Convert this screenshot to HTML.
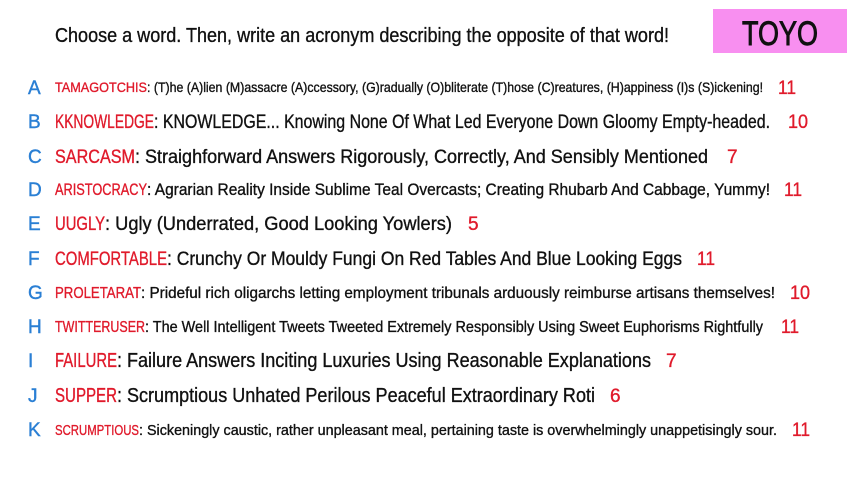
<!DOCTYPE html>
<html><head><meta charset="utf-8"><style>
html,body{margin:0;padding:0;background:#fff;width:853px;height:480px;overflow:hidden}
svg{display:block}
text{font-family:"Liberation Sans Narrow","Liberation Sans",sans-serif}
.l{fill:#2a7fd4;font-size:19px;stroke:#2a7fd4;stroke-width:0.4}
.r{fill:#e01a2b;stroke:#e01a2b;stroke-width:0.35}
.k{fill:#111;stroke:#111;stroke-width:0.35}
</style></head><body>
<svg width="853" height="480" viewBox="0 0 853 480" xmlns="http://www.w3.org/2000/svg">
<rect width="853" height="480" fill="#fff"/>
<text x="55" y="42" font-size="20" class="k" textLength="614" lengthAdjust="spacingAndGlyphs">Choose a word. Then, write an acronym describing the opposite of that word!</text>
<rect x="713" y="9" width="134" height="44" fill="#f88ff0"/>
<text x="742" y="45" font-size="34" class="k" style="stroke-width:0.9" textLength="76" lengthAdjust="spacingAndGlyphs">TOYO</text>

<g>
<text x="28" y="94" class="l">A</text>
<text x="55" y="92" font-size="14" class="r" textLength="92" lengthAdjust="spacingAndGlyphs">TAMAGOTCHIS</text>
<text x="147" y="92" font-size="14" class="k" textLength="616" lengthAdjust="spacingAndGlyphs">:  (T)he (A)lien (M)assacre (A)ccessory, (G)radually (O)bliterate (T)hose (C)reatures, (H)appiness (I)s (S)ickening!</text>
<text x="778" y="94" font-size="19" class="r" textLength="18" lengthAdjust="spacingAndGlyphs">11</text>

<text x="28" y="128" class="l">B</text>
<text x="55" y="128" font-size="19" class="r" textLength="99" lengthAdjust="spacingAndGlyphs">KKNOWLEDGE</text>
<text x="154" y="128" font-size="19" class="k" textLength="616" lengthAdjust="spacingAndGlyphs">:  KNOWLEDGE... Knowing None Of What Led Everyone Down Gloomy Empty-headed.</text>
<text x="788" y="128" font-size="19" class="r" textLength="20" lengthAdjust="spacingAndGlyphs">10</text>

<text x="28" y="163" class="l">C</text>
<text x="55" y="163" font-size="19" class="r" textLength="80" lengthAdjust="spacingAndGlyphs">SARCASM</text>
<text x="135" y="163" font-size="19" class="k" textLength="573" lengthAdjust="spacingAndGlyphs">:  Straighforward Answers Rigorously, Correctly, And Sensibly Mentioned</text>
<text x="727" y="163" font-size="19" class="r">7</text>

<text x="28" y="196" class="l">D</text>
<text x="55" y="195" font-size="17" class="r" textLength="92" lengthAdjust="spacingAndGlyphs">ARISTOCRACY</text>
<text x="147" y="195" font-size="17" class="k" textLength="623" lengthAdjust="spacingAndGlyphs">:  Agrarian Reality Inside Sublime Teal Overcasts; Creating Rhubarb And Cabbage, Yummy!</text>
<text x="784" y="196" font-size="19" class="r" textLength="18" lengthAdjust="spacingAndGlyphs">11</text>

<text x="28" y="230" class="l">E</text>
<text x="55" y="230" font-size="19" class="r" textLength="50" lengthAdjust="spacingAndGlyphs">UUGLY</text>
<text x="105" y="230" font-size="19" class="k" textLength="347" lengthAdjust="spacingAndGlyphs">:  Ugly (Underrated, Good Looking Yowlers)</text>
<text x="468" y="230" font-size="19" class="r">5</text>

<text x="28" y="265" class="l">F</text>
<text x="55" y="265" font-size="19" class="r" textLength="112" lengthAdjust="spacingAndGlyphs">COMFORTABLE</text>
<text x="167" y="265" font-size="19" class="k" textLength="515" lengthAdjust="spacingAndGlyphs">:  Crunchy Or Mouldy Fungi On Red Tables And Blue Looking Eggs</text>
<text x="697" y="265" font-size="19" class="r" textLength="18" lengthAdjust="spacingAndGlyphs">11</text>

<text x="28" y="299" class="l">G</text>
<text x="55" y="298" font-size="16" class="r" textLength="86" lengthAdjust="spacingAndGlyphs">PROLETARAT</text>
<text x="141" y="298" font-size="16" class="k" textLength="634" lengthAdjust="spacingAndGlyphs">:  Prideful rich oligarchs letting employment tribunals arduously reimburse artisans themselves!</text>
<text x="790" y="299" font-size="19" class="r" textLength="20" lengthAdjust="spacingAndGlyphs">10</text>

<text x="28" y="333" class="l">H</text>
<text x="55" y="332" font-size="16" class="r" textLength="90" lengthAdjust="spacingAndGlyphs">TWITTERUSER</text>
<text x="145" y="332" font-size="16" class="k" textLength="618" lengthAdjust="spacingAndGlyphs">:  The Well Intelligent Tweets Tweeted Extremely Responsibly Using Sweet Euphorisms Rightfully</text>
<text x="781" y="333" font-size="19" class="r" textLength="18" lengthAdjust="spacingAndGlyphs">11</text>

<text x="28" y="367" class="l">I</text>
<text x="55" y="367" font-size="20" class="r" textLength="62" lengthAdjust="spacingAndGlyphs">FAILURE</text>
<text x="117" y="367" font-size="20" class="k" textLength="534" lengthAdjust="spacingAndGlyphs">:  Failure Answers Inciting Luxuries Using Reasonable Explanations</text>
<text x="666" y="367" font-size="19" class="r">7</text>

<text x="28" y="402" class="l">J</text>
<text x="55" y="402" font-size="20" class="r" textLength="62" lengthAdjust="spacingAndGlyphs">SUPPER</text>
<text x="117" y="402" font-size="20" class="k" textLength="478" lengthAdjust="spacingAndGlyphs">:  Scrumptious Unhated Perilous Peaceful Extraordinary Roti</text>
<text x="610" y="402" font-size="19" class="r">6</text>

<text x="28" y="436" class="l">K</text>
<text x="55" y="435" font-size="15" class="r" textLength="84" lengthAdjust="spacingAndGlyphs">SCRUMPTIOUS</text>
<text x="139" y="435" font-size="15" class="k" textLength="638" lengthAdjust="spacingAndGlyphs">:  Sickeningly caustic, rather  unpleasant  meal, pertaining  taste is overwhelmingly unappetisingly sour.</text>
<text x="792" y="436" font-size="19" class="r" textLength="18" lengthAdjust="spacingAndGlyphs">11</text>
</g>
</svg>
</body></html>
